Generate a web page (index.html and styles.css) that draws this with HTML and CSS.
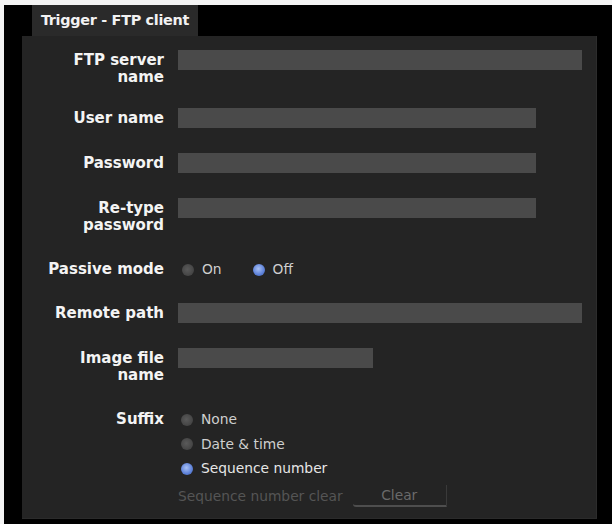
FILE: index.html
```html
<!DOCTYPE html>
<html>
<head>
<meta charset="utf-8">
<link rel="stylesheet" href="styles.css">
</head>
<body>
<div class="frame">
  <div class="tab">Trigger - FTP client</div>
  <div class="panel">
    <div class="row row-first">
      <div class="label">FTP server<br>name</div>
      <div class="field field-long"></div>
    </div>
    <div class="row">
      <div class="label">User name</div>
      <div class="field field-mid"></div>
    </div>
    <div class="row">
      <div class="label">Password</div>
      <div class="field field-mid"></div>
    </div>
    <div class="row">
      <div class="label">Re-type<br>password</div>
      <div class="field field-mid"></div>
    </div>
    <div class="row">
      <div class="label">Passive mode</div>
      <div class="inline-radios">
        <span class="opt"><span class="radio"></span>On</span>
        <span class="opt"><span class="radio radio-on"></span>Off</span>
      </div>
    </div>
    <div class="row">
      <div class="label">Remote path</div>
      <div class="field field-long"></div>
    </div>
    <div class="row">
      <div class="label">Image file<br>name</div>
      <div class="field field-short"></div>
    </div>
    <div class="row">
      <div class="label">Suffix</div>
      <div class="stack">
        <span class="opt"><span class="radio"></span>None</span>
        <span class="opt"><span class="radio"></span>Date &amp; time</span>
        <span class="opt opt-bright"><span class="radio radio-on"></span>Sequence number</span>
        <div class="clear-line">
          <span class="muted">Sequence number clear</span>
          <span class="btn">Clear</span>
        </div>
      </div>
    </div>
  </div>
</div>
</body>
</html>
```
FILE: styles.css
```css
html, body {
  margin: 0;
  padding: 0;
  background: #f4f4f4;
}
body {
  width: 612px;
  height: 524px;
  overflow: hidden;
  font-family: "DejaVu Sans", Verdana, sans-serif;
}
.frame {
  margin: 5px 0 0 4px;
  height: 519px;
  background: #000;
  padding: 0 15px 0 18px;
  box-sizing: border-box;
  display: flex;
  flex-direction: column;
}
.tab {
  margin-left: 10px;
  width: 166px;
  height: 31px;
  background: #2a2a2a;
  color: #f2f2f2;
  font-weight: bold;
  font-size: 14.4px;
  line-height: 31px;
  text-align: center;
  letter-spacing: -0.3px;
  white-space: nowrap;
  box-sizing: border-box;
}
.panel {
  background: #242424;
  height: 483px;
  box-sizing: border-box;
  padding-top: 16px;
  border-right: 1px solid #2c2c2c;
  border-bottom: 1px solid #2b2b2b;
  display: flex;
  flex-direction: column;
  gap: 27px;
}
.row {
  display: flex;
  align-items: flex-start;
  gap: 14px;
}
.row-first {
  margin-bottom: -3px;
}
.label {
  width: 142px;
  flex: none;
  text-align: right;
  color: #f4f4f4;
  font-weight: bold;
  font-size: 15px;
  line-height: 17px;
  white-space: nowrap;
}
.field {
  height: 20px;
  margin-top: -2px;
  background: #4a4a4a;
}
.field-long { width: 404px; }
.field-mid { width: 358px; }
.field-short { width: 195px; }
.inline-radios {
  display: flex;
  gap: 31px;
  padding-left: 4px;
}
.opt {
  display: flex;
  align-items: center;
  gap: 8px;
  color: #cfcfcf;
  font-size: 13.8px;
  line-height: 17px;
  height: 17px;
  white-space: nowrap;
}
.opt-bright { color: #e6e6e6; }
.radio {
  width: 12px;
  height: 12px;
  border-radius: 50%;
  background: radial-gradient(circle at 45% 45%, #5a5a5a, #444 70%);
  flex: none;
}
.radio-on {
  background: radial-gradient(circle at 45% 40%, #a9c1f5, #5c80d8 60%, #3d5ea8);
}
.stack {
  display: flex;
  flex-direction: column;
  gap: 7.5px;
  padding-left: 3px;
}
.clear-line {
  display: flex;
  align-items: center;
  gap: 10px;
  margin-left: -3px;
  margin-top: 0;
}
.muted {
  color: #555;
  font-size: 13.8px;
  white-space: nowrap;
}
.btn {
  width: 94px;
  height: 22px;
  box-sizing: border-box;
  border-bottom: 2px solid #4e4e4e;
  border-right: 1px solid #3a3a3a;
  border-bottom-left-radius: 3px;
  color: #6a6a6a;
  font-size: 13.8px;
  line-height: 20px;
  text-align: center;
}
```
